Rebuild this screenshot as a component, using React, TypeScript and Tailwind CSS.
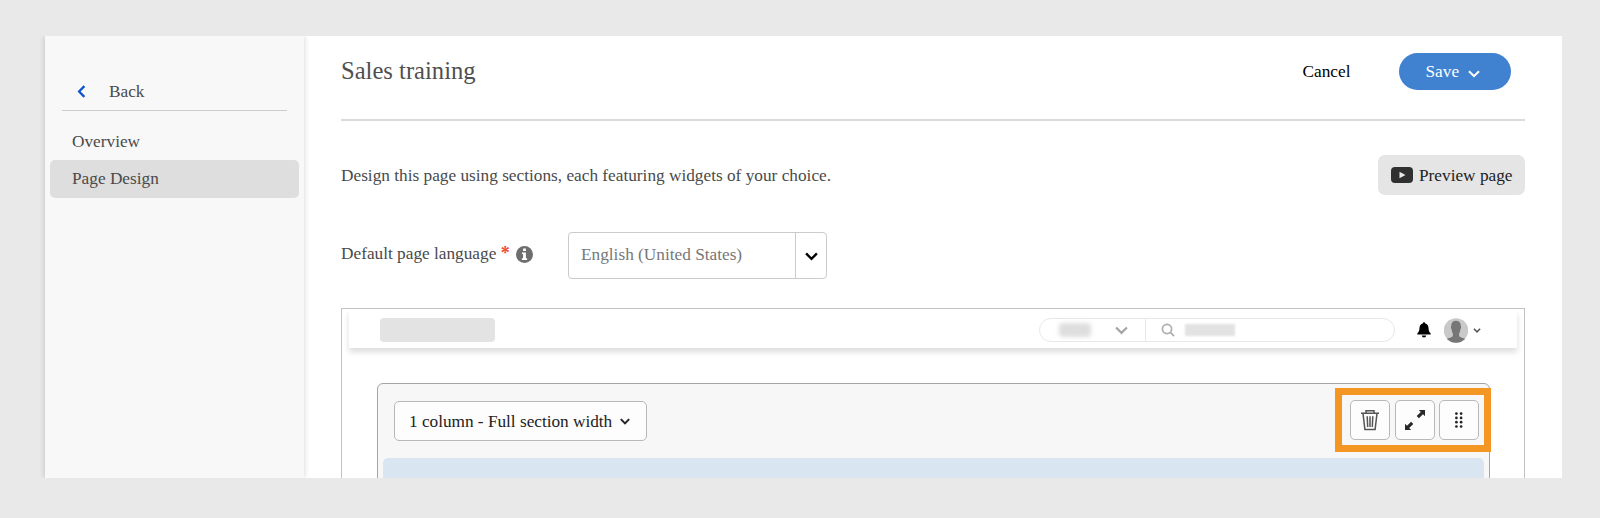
import React from "react";

function Chevron({ className, stroke = 2 }: { className: string; stroke?: number }) {
  return (
    <svg viewBox="0 0 12 8" className={className} fill="none" stroke="currentColor" strokeWidth={stroke}>
      <path d="M1 1.2 6 6.2 11 1.2" />
    </svg>
  );
}

function Sidebar() {
  return (
    <aside className="relative z-10 flex w-[259px] shrink-0 flex-col bg-[#f8f8f8] shadow-[0_0_6px_rgba(0,0,0,0.18)]">
      <div className="ml-[17px] mt-9 flex h-[39px] w-[225px] items-center border-b border-[#cdcdcd]">
        <svg viewBox="0 0 9 14" className="ml-[15px] mt-px h-[13px] w-[9px] text-[#0b53d0]" fill="none" stroke="currentColor" strokeWidth="2.4">
          <path d="M7.6 1.2 1.9 7l5.7 5.8" />
        </svg>
        <span className="ml-[23px] pt-px">Back</span>
      </div>
      <div className="ml-[5px] mt-[13px] flex h-9 w-[249px] items-center pl-[22px]">Overview</div>
      <div className="ml-[5px] flex h-[38px] w-[249px] items-center rounded-[5px] bg-[#dedede] pl-[22px]">Page Design</div>
    </aside>
  );
}

function Header() {
  return (
    <header className="flex h-[85px] shrink-0 items-start border-b-2 border-[#dadada]">
      <h1 className="mt-[20px] text-[24.6px] leading-[30px] text-[#4f4f4f]">Sales training</h1>
      <button className="ml-auto mt-[17px] h-[37px] text-black">Cancel</button>
      <button className="ml-12 mr-[14.500px] mt-[17px] flex h-[37px] w-[112px] items-center rounded-full bg-[#4182d0] pl-[27px] text-white">
        Save
        <Chevron className="ml-[9px] mt-1 h-2 w-3" />
      </button>
    </header>
  );
}

function TopBar() {
  return (
    <div className="mx-[7px] mt-px flex h-[38px] items-center bg-white pt-[2px] shadow-[0_4px_6px_rgba(0,0,0,0.14)]">
      <div className="ml-[31px] h-[24px] w-[115px] rounded bg-[#e3e3e3]" />
      <div className="ml-auto flex h-[24px] w-[356px] items-center rounded-full border border-[#e8e8e8]">
        <div className="ml-[19px] h-[14px] w-8 rounded bg-[#dedede] blur-[2px]" />
        <Chevron className="ml-6 h-[9px] w-[13px] text-[#a4a4a4]" />
        <div className="ml-[17px] h-full w-px bg-[#e8e8e8]" />
        <svg viewBox="0 0 14 14" className="ml-[15px] h-[14px] w-[14px] text-[#adadad]" fill="none" stroke="currentColor" strokeWidth="1.7">
          <circle cx="6" cy="6" r="4.6" />
          <path d="m9.3 9.3 3.8 3.8" />
        </svg>
        <div className="ml-[10px] h-3 w-[50px] bg-[#e2e2e2] blur-[1px]" />
      </div>
      <svg viewBox="0 0 14 16" className="ml-[22px] h-4 w-[14px]" fill="black">
        <path d="M5.800 1.400a1.200 1.200 0 0 1 2.400 0c2.100.6 3.200 2 3.300 4.300.1 2.600.5 4 2.200 5.800v1H.3v-1c1.700-1.800 2.100-3.200 2.200-5.800.1-2.300 1.200-3.700 3.300-4.300ZM4.700 13.500h4.600c-.2 1.200-1.100 1.900-2.300 1.900s-2.100-.7-2.300-1.900Z" />
      </svg>
      <svg viewBox="0 0 26 26" className="ml-3 h-[25px] w-[26px]">
        <defs>
          <clipPath id="avatar"><circle cx="13" cy="13" r="12.700" /></clipPath>
        </defs>
        <g clipPath="url(#avatar)">
          <rect width="26" height="26" fill="#c9c9c9" />
          <path d="M13 2.800c3.500 0 5.200 2.300 5 5.800.6.500.4 2.400-.4 3-.2 1.900-.7 3.300-1.300 4.300v3c1 1.300 4.400 1.600 6.700 3.100L24 27H2l1-5c2.300-1.500 5.700-1.800 6.700-3.100v-3c-.6-1-1.100-2.400-1.300-4.300-.8-.6-1-2.500-.4-3-.2-3.500 1.500-5.800 5-5.800Z" fill="#767676" />
        </g>
      </svg>
      <Chevron className="ml-1 mr-[36px] h-[5px] w-[8px] text-[#555]" stroke={2.4} />
    </div>
  );
}

const toolButton = "flex h-[40px] w-[40px] shrink-0 items-center justify-center rounded-[5px] border border-[#b8b8b8] bg-[#fdfdfd]";

function SectionTools() {
  return (
    <div className="absolute -right-[2px] top-[4px] flex h-[64px] w-[156px] items-center gap-[4.500px] border-[7px] border-[#f39623] pl-[8px]">
      <div className={toolButton}>
        <svg viewBox="0 0 20 22" className="h-[22px] w-[20px] text-[#555]" fill="none" stroke="currentColor" strokeWidth="1.500">
          <path d="M1 4.200h18M6 4V1.700h8V4M3 4.400l1.900 16.200h10.200L17 4.400M7.200 7.200l.5 10.800M10 7.200V18M12.800 7.200 12.300 18" />
        </svg>
      </div>
      <div className={toolButton}>
        <svg viewBox="0 0 22 22" className="h-[22px] w-[22px] text-[#292929]" fill="currentColor">
          <path d="M14.800 1H21v6.200l-2-2-4.100 4.100-2.200-2.200L16.800 3ZM1 14.800l2 2 4.100-4.100 2.200 2.200L5.200 19l2 2H1Z" />
        </svg>
      </div>
      <div className={toolButton}>
        <svg viewBox="0 0 8 16" className="h-4 w-2" fill="#222">
          {[1.600, 5.900, 10.200, 14.500].map((y) => (
            <g key={y}>
              <circle cx="1.400" cy={y} r="1.350" />
              <circle cx="6.100" cy={y} r="1.350" />
            </g>
          ))}
        </svg>
      </div>
    </div>
  );
}

export default function App() {
  return (
    <div className="h-[518px] w-[1600px] overflow-hidden bg-[#e9e9e9] pl-[45px] pt-9 font-['Liberation_Serif',serif] text-[17.270px] text-[#4a4a4a]">
      <div className="-ml-[5px] h-[442px] w-[1522px] overflow-hidden pl-[5px]">
        <div className="flex h-full bg-white">
          <Sidebar />
          <main className="flex w-[1221px] shrink-0 flex-col pl-[37px]">
            <Header />
            <div className="mt-[34px] flex h-[40px] shrink-0 items-center">
              <p className="pt-px">Design this page using sections, each featuring widgets of your choice.</p>
              <button className="ml-auto flex h-[40px] w-[147px] items-center rounded-[7px] bg-[#e5e5e5] pl-[13px] text-[#222]">
                <svg viewBox="0 0 22 16" className="h-4 w-[22px]">
                  <rect width="22" height="16" rx="4" fill="#303030" />
                  <path d="m8.500 4.800 6 3.200-6 3.200Z" fill="#e9e9e9" />
                </svg>
                <span className="ml-[6px] whitespace-nowrap pt-px">Preview page</span>
              </button>
            </div>
            <div className="mt-[37px] flex h-[47px] shrink-0 items-center">
              <label className="-mt-1 w-[168px] whitespace-nowrap">
                Default page language <span className="text-[18px] font-bold leading-none text-[#f04a32]">*</span>
              </label>
              <svg viewBox="0 0 17 17" className="-mt-[2px] ml-[7px] h-[17px] w-[17px]">
                <circle cx="8.500" cy="8.500" r="8.500" fill="#6e6e6e" />
                <path d="M7.100 2.600h2.800v2.500H7.100ZM6 6.400h3.900v5.900h1.200V14H5.900v-1.700h1.200V8.100H6Z" fill="white" />
              </svg>
              <div className="ml-[35px] flex h-[47px] w-[259px] items-center rounded-[4px] border border-[#cbcbcb] text-[#777]">
                <span className="-mt-[2px] ml-3">English (United States)</span>
                <div className="ml-auto flex h-full w-[31px] items-center justify-center border-l border-[#cbcbcb] text-black">
                  <Chevron className="mt-px h-[9px] w-[13px]" stroke={2.200} />
                </div>
              </div>
            </div>
            <div className="mt-[29px] h-[180px] w-[1184px] shrink-0 border border-[#c5c1c2]">
              <TopBar />
              <section className="relative ml-[35px] mt-[35px] h-[110px] w-[1113px] rounded-[6px] border border-[#a4a4a4] bg-[#f7f7f7] px-[5px] pt-[17px]">
                <div className="ml-[11px] flex h-[40px] w-[253px] items-center rounded-[5px] border border-[#b8b8b8] bg-[#fdfdfd] pl-[14px] text-[#222]">
                  <span className="pt-px tracking-[-0.020px]">1 column - Full section width</span>
                  <Chevron className="ml-[8px] mt-px h-[7px] w-[10px]" stroke={2.400} />
                </div>
                <div className="mt-[17px] h-12 rounded-t-[5px] bg-[#d9e6f1]" />
                <SectionTools />
              </section>
            </div>
          </main>
        </div>
      </div>
    </div>
  );
}
